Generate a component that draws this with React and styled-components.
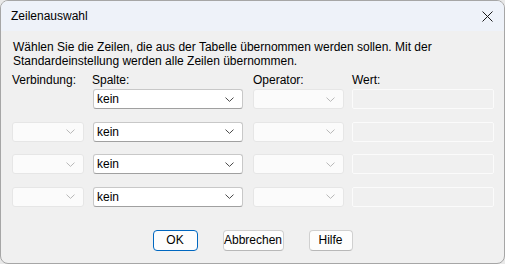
import React from "react";
import styled, { createGlobalStyle } from "styled-components";

const GlobalStyle = createGlobalStyle`
  html, body {
    margin: 0;
    padding: 0;
    background: #e9e9e9;
  }
  body {
    font-family: "Liberation Sans", Arial, sans-serif;
    font-size: 12px;
    color: #000;
  }
`;

const Window = styled.div`
  width: 503px;
  height: 262px;
  border: 1px solid #a6a6a6;
  border-radius: 8px;
  overflow: hidden;
  background: #f0f0f0;
  display: flex;
  flex-direction: column;
`;

const TitleBar = styled.div`
  height: 30px;
  background: #eef2f9;
  display: flex;
  align-items: center;
  justify-content: space-between;
  padding: 0 10px 0 10px;
  flex-shrink: 0;
`;

const Title = styled.span`
  font-size: 12px;
  color: #000;
`;

const CloseButton = styled.div`
  width: 14px;
  height: 14px;
  display: flex;
  align-items: center;
  justify-content: center;
`;

const Body = styled.div`
  padding: 10px 11px 0 11px;
  display: flex;
  flex-direction: column;
`;

const Description = styled.p`
  margin: 0 0 0 1px;
  line-height: 13.5px;
`;

const Grid = styled.div`
  display: grid;
  grid-template-columns: 81px 160px 99px 142px;
  align-items: center;
`;

const LabelRow = styled(Grid)`
  margin-top: 5px;
  height: 15px;
  line-height: 15px;
`;

const Rows = styled(Grid)`
  margin-top: 1px;
  grid-auto-rows: 20px;
  row-gap: 12.5px;
`;

const Label = styled.span`
  margin-left: ${(p) => p.$shift || 0}px;
`;

const Combo = styled.div`
  box-sizing: border-box;
  width: ${(p) => p.$width}px;
  height: 20px;
  border: 1px solid ${(p) => (p.$disabled ? "#e6e6e6" : "#c8c8c8")};
  border-bottom-color: ${(p) => (p.$disabled ? "#e6e6e6" : "#a0a0a0")};
  border-radius: 3px;
  background: ${(p) => (p.$disabled ? "#fbfbfb" : "#ffffff")};
  display: flex;
  align-items: center;
  justify-content: space-between;
  padding: 0 8px 0 3px;
`;

const ComboText = styled.span`
  color: #000;
`;

const Chevron = ({ disabled }) => (
  <svg width="9" height="5" viewBox="0 0 9 5">
    <path
      d="M0.5 0.6 L4.5 4.4 L8.5 0.6"
      fill="none"
      stroke={disabled ? "#b8b8b8" : "#4a4a4a"}
      strokeWidth="1"
    />
  </svg>
);

const TextBox = styled.div`
  box-sizing: border-box;
  width: ${(p) => p.$width}px;
  height: 20px;
  border: 1px solid #fbfbfb;
  border-radius: 2px;
  background: #f0f0f0;
`;

const ButtonRow = styled.div`
  display: flex;
  justify-content: center;
  gap: 25px;
  margin-top: 23px;
`;

const Button = styled.button`
  box-sizing: border-box;
  height: 21px;
  width: ${(p) => p.$width}px;
  padding: 0;
  font-family: inherit;
  font-size: 12px;
  color: #000;
  background: #fdfdfd;
  border: 1px solid ${(p) => (p.$primary ? "#0067c0" : "#d0d0d0")};
  border-bottom-color: ${(p) => (p.$primary ? "#0067c0" : "#b8b8b8")};
  border-radius: 4px;
`;

const rows = [0, 1, 2, 3];

export default function App() {
  return (
    <>
      <GlobalStyle />
      <Window>
        <TitleBar>
          <Title>Zeilenauswahl</Title>
          <CloseButton>
            <svg width="11" height="11" viewBox="0 0 11 11">
              <path d="M0.5 0.5 L10.5 10.5 M10.5 0.5 L0.5 10.5" stroke="#1a1a1a" strokeWidth="1" />
            </svg>
          </CloseButton>
        </TitleBar>
        <Body>
          <Description>
            Wählen Sie die Zeilen, die aus der Tabelle übernommen werden sollen. Mit der
            <br />
            Standardeinstellung werden alle Zeilen übernommen.
          </Description>
          <LabelRow>
            <Label>Verbindung:</Label>
            <Label $shift={-1}>Spalte:</Label>
            <Label>Operator:</Label>
            <Label>Wert:</Label>
          </LabelRow>
          <Rows>
            {rows.map((i) => (
              <React.Fragment key={i}>
                {i === 0 ? (
                  <span />
                ) : (
                  <Combo $width={72} $disabled>
                    <span />
                    <Chevron disabled />
                  </Combo>
                )}
                <Combo $width={150}>
                  <ComboText>kein</ComboText>
                  <Chevron />
                </Combo>
                <Combo $width={91} $disabled>
                  <span />
                  <Chevron disabled />
                </Combo>
                <TextBox $width={142} />
              </React.Fragment>
            ))}
          </Rows>
          <ButtonRow>
            <Button $primary $width={45}>OK</Button>
            <Button $width={61}>Abbrechen</Button>
            <Button $width={44}>Hilfe</Button>
          </ButtonRow>
        </Body>
      </Window>
    </>
  );
}
